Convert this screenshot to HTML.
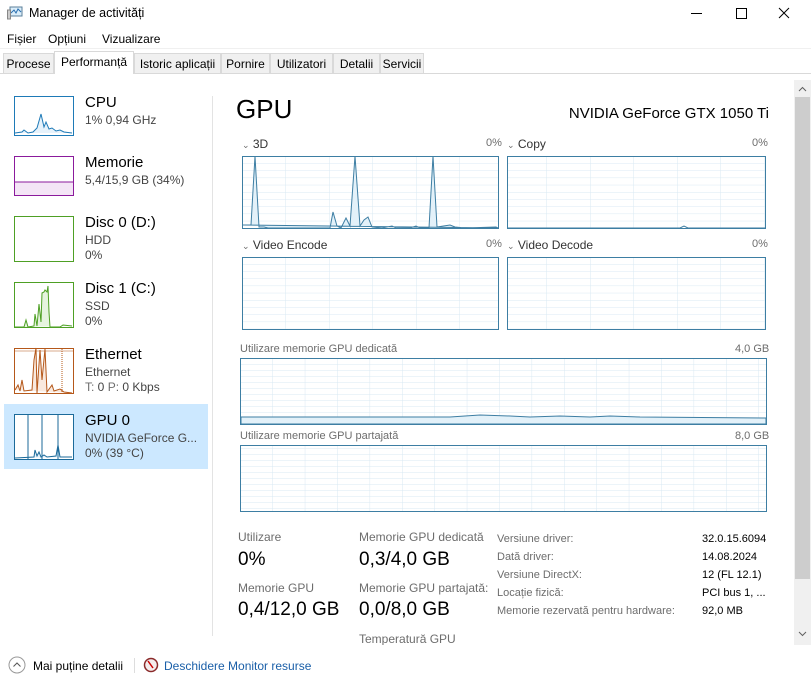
<!DOCTYPE html><html><head><meta charset="utf-8"><style>
*{margin:0;padding:0;box-sizing:border-box}
body{width:811px;height:690px;background:#fff;font-family:"Liberation Sans",sans-serif;color:#000;position:relative;overflow:hidden;font-size:12px}
.a{position:absolute;white-space:nowrap}
.tab{position:absolute;top:53px;height:20px;border:1px solid #d9d9d9;border-bottom:none;background:#f0f0f0;font-size:12px;padding-top:3px;text-align:center}
.g{color:#444}
.lbl{font-size:12px;color:#333}
.gray{color:#6d6d6d}
</style></head><body>
<!-- title -->
<svg class="a" style="left:7px;top:6px" width="16" height="14" viewBox="0 0 16 14"><rect x="3" y="1" width="12" height="9" fill="#dbeefa" stroke="#5b7f99"/><path d="M4 7 L7 4 L9 7 L11 3 L14 6" stroke="#2a6fb0" fill="none"/><rect x="0.5" y="4" width="3" height="9" fill="#ccc" stroke="#888"/></svg>
<div class="a" style="left:29px;top:6px;font-size:12.5px">Manager de activități</div>
<svg class="a" style="left:680px;top:0" width="131" height="28"><path d="M11 13.5 H22 M56.5 8.5 H66.5 V18.5 H56.5 Z M99 8 L109 18 M109 8 L99 18" stroke="#000" stroke-width="1" fill="none"/></svg>
<!-- menu -->
<div class="a" style="left:7px;top:32px;font-size:12px">Fișier</div>
<div class="a" style="left:48px;top:32px;font-size:12px">Opțiuni</div>
<div class="a" style="left:102px;top:32px;font-size:12px">Vizualizare</div>
<!-- tabs -->
<div class="a" style="left:0;top:48px;width:811px;height:1px;background:#f0f0f0"></div>
<div class="a" style="left:0;top:73px;width:811px;height:1px;background:#d9d9d9"></div>
<div class="tab" style="left:3px;width:51px">Procese</div>
<div class="tab" style="left:134px;width:87px">Istoric aplicații</div>
<div class="tab" style="left:221px;width:49px">Pornire</div>
<div class="tab" style="left:270px;width:63px">Utilizatori</div>
<div class="tab" style="left:333px;width:47px">Detalii</div>
<div class="tab" style="left:380px;width:44px">Servicii</div>
<div class="tab" style="left:54px;top:51px;height:23px;width:80px;background:#fff;padding-top:3px">Performanță</div>
<!-- scrollbar -->
<div class="a" style="left:794px;top:80px;width:17px;height:565px;background:#f0f0f0"></div>
<div class="a" style="left:795px;top:97px;width:15px;height:482px;background:#cdcdcd"></div>
<svg class="a" style="left:794px;top:80px" width="17" height="565"><path d="M5 11 L8.5 7.5 L12 11 M5 552 L8.5 555.5 L12 552" stroke="#606060" fill="none"/></svg>
<!-- sidebar -->
<div class="a" style="left:4px;top:404px;width:204px;height:65px;background:#cce8ff"></div>
<div class="a" style="left:212px;top:96px;width:1px;height:540px;background:#e3e3e3"></div>
<svg class="a" style="left:0;top:0" width="212" height="470">
<g fill="none" stroke-width="1">
<rect x="14.5" y="96.5" width="59" height="39" fill="#fff" stroke="#1e7ab7"/>
<path d="M15 133 L22 132 L24 130 L28 133 L33 132 L37 128 L41 114 L44 127 L46 122 L49 129 L52 128 L56 131 L60 130 L64 132 L72 133" stroke="#1e7ab7" fill="#e6f2fb"/>
<rect x="14.5" y="156.5" width="59" height="39" fill="#fff" stroke="#8b1a9c"/>
<rect x="15" y="182" width="58" height="13" fill="#f4e5f6"/><path d="M15 182 H73" stroke="#8b1a9c"/>
<rect x="14.5" y="216.5" width="59" height="45" fill="#fff" stroke="#4ea024"/>
<rect x="14.5" y="282.5" width="59" height="45" fill="#fff" stroke="#4ea024"/>
<path d="M15 327 L24 327 L26 320 L28 327 L34 326 L35 314 L37 326 L39 304 L41 322 L42 293 L44 292 L45 290 L47 292 L48 286 L49 312 L50 327 L60 327 L63 325 L72 326" stroke="#4ea024" fill="#e6f4df"/>
<rect x="14.5" y="348.5" width="59" height="45" fill="#fff" stroke="#b5581a"/>
<path d="M15 351 H73" stroke="#b5581a" stroke-width="0.6"/>
<path d="M15 390 L18 385 L20 391 L22 380 L24 391 L32 390 L34 360 L36 348 L37 393 L40 350 L42 380 L45 349 L47 392 L52 385 L54 391 L60 389 L64 392 L72 393" stroke="#b5581a" fill="#f9e9de"/>
<path d="M62 349 V393" stroke="#b5581a" stroke-dasharray="1 1"/>
<rect x="14.5" y="414.5" width="59" height="45" fill="#fff" stroke="#1b6a9a"/>
<path d="M15 458 L34 457 L35 450 L37 456 L39 452 L41 457 L44 455 L47 457 L56 456 L58 445 L60 457 L72 457" stroke="#1b6a9a" fill="#e6f2fb"/>
<path d="M28 415 V459 M42 415 V459 M58 415 V459" stroke="#1b6a9a"/>
</g></svg>
<div class="a" style="left:85px;top:94px;font-size:15px">CPU</div>
<div class="a g" style="left:85px;top:113px">1% 0,94 GHz</div>
<div class="a" style="left:85px;top:154px;font-size:15px">Memorie</div>
<div class="a g" style="left:85px;top:173px">5,4/15,9 GB (34%)</div>
<div class="a" style="left:85px;top:214px;font-size:15px">Disc 0 (D:)</div>
<div class="a g" style="left:85px;top:233px">HDD</div>
<div class="a g" style="left:85px;top:248px">0%</div>
<div class="a" style="left:85px;top:280px;font-size:15px">Disc 1 (C:)</div>
<div class="a g" style="left:85px;top:299px">SSD</div>
<div class="a g" style="left:85px;top:314px">0%</div>
<div class="a" style="left:85px;top:346px;font-size:15px">Ethernet</div>
<div class="a g" style="left:85px;top:365px">Ethernet</div>
<div class="a g" style="left:85px;top:380px"><span class="gray">T:</span> 0 <span class="gray">P:</span> 0 Kbps</div>
<div class="a" style="left:85px;top:412px;font-size:15px">GPU 0</div>
<div class="a g" style="left:85px;top:431px">NVIDIA GeForce G...</div>
<div class="a g" style="left:85px;top:446px">0% (39 °C)</div>
<!-- main -->
<div class="a" style="left:236px;top:94px;font-size:26px">GPU</div>
<div class="a" style="right:42px;top:105px;font-size:15px">NVIDIA GeForce GTX 1050 Ti</div>
<div class="a lbl" style="left:242px;top:137px"><span class="gray" style="font-size:9px">&#8964;</span> 3D</div>
<div class="a lbl gray" style="left:486px;top:137px;font-size:11px">0%</div>
<div class="a lbl" style="left:507px;top:137px"><span class="gray" style="font-size:9px">&#8964;</span> Copy</div>
<div class="a lbl gray" style="left:752px;top:137px;font-size:11px">0%</div>
<div class="a lbl" style="left:242px;top:238px"><span class="gray" style="font-size:9px">&#8964;</span> Video Encode</div>
<div class="a lbl gray" style="left:486px;top:238px;font-size:11px">0%</div>
<div class="a lbl" style="left:507px;top:238px"><span class="gray" style="font-size:9px">&#8964;</span> Video Decode</div>
<div class="a lbl gray" style="left:752px;top:238px;font-size:11px">0%</div>
<div class="a gray" style="left:240px;top:343px;font-size:11px">Utilizare memorie GPU dedicată</div>
<div class="a gray" style="left:735px;top:343px;font-size:11px">4,0 GB</div>
<div class="a gray" style="left:240px;top:430px;font-size:11px">Utilizare memorie GPU partajată</div>
<div class="a gray" style="left:735px;top:430px;font-size:11px">8,0 GB</div>
<svg class="a" style="left:0;top:0" width="790" height="520">
<defs>
<pattern id="p1" x="242" y="156" width="43.5" height="7.2" patternUnits="userSpaceOnUse"><path d="M0 0 H43.5 M0 0 V7.2" stroke="#d9e9f3" fill="none"/></pattern>
<pattern id="p2" x="240" y="358" width="32.4" height="6" patternUnits="userSpaceOnUse"><path d="M0 0 H32.4 M0 0 V6" stroke="#d9e9f3" fill="none"/></pattern>
</defs>
<g stroke="#3d7ea3" stroke-width="1">
<rect x="242.5" y="156.5" width="256" height="72" fill="url(#p1)"/>
<rect x="507.5" y="156.5" width="258" height="72" fill="url(#p1)"/>
<rect x="242.5" y="257.5" width="256" height="72" fill="url(#p1)"/>
<rect x="507.5" y="257.5" width="258" height="72" fill="url(#p1)"/>
<rect x="240.5" y="358.5" width="526" height="66" fill="url(#p2)"/>
<rect x="240.5" y="445.5" width="526" height="66" fill="url(#p2)"/>
</g>
<path d="M243 225 L251 225 L255 156 L259 227 L264 227 L268 228 L330 228 L333 212 L337 226 L341 228 L346 218 L350 226 L355 156 L360 226 L364 220 L368 217 L372 227 L382 228 L392 226 L396 228 L410 228 L416 226 L420 228 L429 228 L433 156 L437 227 L450 225 L455 227 L465 228 L496 227 L498 228 Z" fill="#e3f1f9" stroke="#3d7ea3"/>
<path d="M508 228 L680 228 L684 226 L688 228 L765 228" stroke="#3d7ea3" fill="none"/>
<path d="M241 417 L450 417 L480 415 L510 416 L530 417 L560 416 L590 417 L610 416 L640 417 L766 418 L766 424 L241 424 Z" fill="#e3f1f9" stroke="#3d7ea3"/>
</svg>
<!-- stats -->
<div class="a gray" style="left:238px;top:530px">Utilizare</div>
<div class="a" style="left:238px;top:549px;font-size:19px">0%</div>
<div class="a gray" style="left:238px;top:581px">Memorie GPU</div>
<div class="a" style="left:238px;top:599px;font-size:19px">0,4/12,0 GB</div>
<div class="a gray" style="left:359px;top:530px">Memorie GPU dedicată</div>
<div class="a" style="left:359px;top:549px;font-size:19px">0,3/4,0 GB</div>
<div class="a gray" style="left:359px;top:581px">Memorie GPU partajată:</div>
<div class="a" style="left:359px;top:599px;font-size:19px">0,0/8,0 GB</div>
<div class="a gray" style="left:359px;top:632px">Temperatură GPU</div>
<div class="a gray" style="left:497px;top:530px;font-size:11px;line-height:18px">Versiune driver:<br>Dată driver:<br>Versiune DirectX:<br>Locație fizică:<br>Memorie rezervată pentru hardware:</div>
<div class="a" style="left:702px;top:530px;font-size:11px;line-height:18px">32.0.15.6094<br>14.08.2024<br>12 (FL 12.1)<br>PCI bus 1, ...<br>92,0 MB</div>
<!-- bottom -->
<div class="a" style="left:0;top:645px;width:811px;height:45px;background:#fff"></div>
<svg class="a" style="left:8px;top:656px" width="18" height="18"><circle cx="9" cy="9" r="8" fill="none" stroke="#999"/><path d="M5.5 10.5 L9 7 L12.5 10.5" stroke="#555" fill="none"/></svg>
<div class="a" style="left:33px;top:659px">Mai puține detalii</div>
<div class="a" style="left:134px;top:658px;width:1px;height:15px;background:#ddd"></div>
<svg class="a" style="left:143px;top:657px" width="16" height="16"><circle cx="8" cy="8" r="6.5" fill="#f4ecec" stroke="#8a2a2a" stroke-width="1.5"/><path d="M5 4 L10 11" stroke="#c00" stroke-width="1.5"/></svg>
<div class="a" style="left:164px;top:659px;color:#1a5fa8">Deschidere Monitor resurse</div>
</body></html>
